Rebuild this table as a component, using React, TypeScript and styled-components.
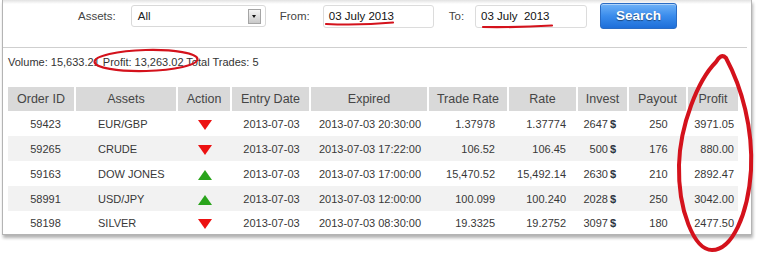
import styled, { createGlobalStyle } from "styled-components";

const TRADES = [
  { id: 59423, asset: "EUR/GBP", dir: "down", entry: "2013-07-03", expired: "2013-07-03 20:30:00", tradeRate: "1.37978", rate: "1.37774", invest: 2647, payout: 250, profit: "3971.05" },
  { id: 59265, asset: "CRUDE", dir: "down", entry: "2013-07-03", expired: "2013-07-03 17:22:00", tradeRate: "106.52", rate: "106.45", invest: 500, payout: 176, profit: "880.00" },
  { id: 59163, asset: "DOW JONES", dir: "up", entry: "2013-07-03", expired: "2013-07-03 17:00:00", tradeRate: "15,470.52", rate: "15,492.14", invest: 2630, payout: 210, profit: "2892.47" },
  { id: 58991, asset: "USD/JPY", dir: "up", entry: "2013-07-03", expired: "2013-07-03 12:00:00", tradeRate: "100.099", rate: "100.240", invest: 2028, payout: 250, profit: "3042.00" },
  { id: 58198, asset: "SILVER", dir: "down", entry: "2013-07-03", expired: "2013-07-03 08:30:00", tradeRate: "19.3325", rate: "19.2752", invest: 3097, payout: 180, profit: "2477.50" },
];

const COLS = [68, 102, 54, 79, 118, 80, 69, 51, 59, 50];

const App = () => {
  return (
    <>
      <GlobalStyle />
      <Page>
        <Panel>
          <FilterBar>
            <Label>Assets:</Label>
            <Select $ml={15}>
              <span>All</span>
              <DropButton />
            </Select>
            <Label $ml={14}>From:</Label>
            <DateInput $ml={13} $w={111}>03 July 2013</DateInput>
            <Label $ml={15}>To:</Label>
            <DateInput $ml={11} $w={112}>03 July&nbsp; 2013</DateInput>
            <SearchButton $ml={13}>Search</SearchButton>
          </FilterBar>
          <Stats>Volume: 15,633.21 Profit: 13,263.02 Total Trades: 5</Stats>
          <Table>
            <colgroup>
              {COLS.map((w, i) => (
                <col key={i} style={{ width: w }} />
              ))}
            </colgroup>
            <thead>
              <tr>
                <Th>Order ID</Th>
                <Th>Assets</Th>
                <Th>Action</Th>
                <Th>Entry Date</Th>
                <Th>Expired</Th>
                <Th>Trade Rate</Th>
                <Th>Rate</Th>
                <Th>Invest</Th>
                <Th>Payout</Th>
                <Th $last>Profit</Th>
              </tr>
            </thead>
            <tbody>
              {TRADES.map((t) => (
                <Row key={t.id}>
                  <Td $pl={7}>{t.id}</Td>
                  <Td $align="left" $pl={22}>{t.asset}</Td>
                  <Td>
                    <Arrow $dir={t.dir} />
                  </Td>
                  <Td>{t.entry}</Td>
                  <Td>{t.expired}</Td>
                  <Td $align="right" $pr={14}>{t.tradeRate}</Td>
                  <Td $align="right" $pr={12}>{t.rate}</Td>
                  <Td $align="right" $pr={13}>
                    {t.invest}
                    <Dollar>$</Dollar>
                  </Td>
                  <Td>{t.payout}</Td>
                  <Td $align="right" $pr={4}>{t.profit}</Td>
                </Row>
              ))}
            </tbody>
          </Table>
        </Panel>
        {/* hand-drawn red annotations over the screenshot */}
        <Marks width="757" height="256" viewBox="0 0 757 256">
          <path d="M326 24 Q360 25.5 393 22.5" />
          <path d="M483 27 Q518 27.5 552 25.5" />
          <ellipse cx="146" cy="60.5" rx="51.5" ry="10.5" transform="rotate(-1.5 146 60.5)" />
          <path
            strokeWidth="4"
            d="M716 62 C698 80 680 125 679 165 C678 210 694 250 712 250 C732 250 748 215 751 170 C753 128 742 88 726 58 C722 54 719 57 716 62"
          />
        </Marks>
      </Page>
    </>
  );
};

const GlobalStyle = createGlobalStyle`
  body {
    margin: 0;
    background: #fff;
    font-family: "Liberation Sans", Arial, sans-serif;
  }
`;

const Page = styled.div`
  position: relative;
  width: 757px;
  height: 256px;
  overflow: hidden;
`;

const Panel = styled.div`
  margin-left: 2px;
  width: 748px;
  height: 234px;
  border: 1px solid #b4b4b4;
  border-top: none;
  background: linear-gradient(to bottom, #e2e2e2 0, #fff 4px);
  box-shadow: 1px 3px 3px rgba(0, 0, 0, 0.3);
`;

const FilterBar = styled.div`
  display: flex;
  align-items: center;
  height: 32px;
  padding: 0 0 15px 75px;
  margin-right: 4px;
  border-bottom: 1px solid #cfcfcf;
`;

const Label = styled.span<{ $ml?: number }>`
  margin-left: ${(p) => p.$ml ?? 0}px;
  font-size: 11.5px;
  color: #444;
`;

const Select = styled.div<{ $ml: number }>`
  display: flex;
  align-items: center;
  justify-content: space-between;
  box-sizing: border-box;
  margin-left: ${(p) => p.$ml}px;
  width: 135px;
  height: 22px;
  padding: 0 4px 0 6px;
  border: 1px solid #d9d9d9;
  border-radius: 3px;
  font-size: 11.5px;
  color: #222;
`;

const DropButton = styled.span`
  position: relative;
  box-sizing: border-box;
  width: 13px;
  height: 15px;
  border: 1px solid #a5a5a5;
  background: linear-gradient(#f4f4f4, #c9c9c9);
  &::after {
    content: "";
    position: absolute;
    left: 3px;
    top: 5px;
    border-left: 2.5px solid transparent;
    border-right: 2.5px solid transparent;
    border-top: 3px solid #111;
  }
`;

const DateInput = styled.div<{ $ml: number; $w: number }>`
  box-sizing: border-box;
  margin-left: ${(p) => p.$ml}px;
  width: ${(p) => p.$w}px;
  height: 23px;
  padding: 4px 0 0 5px;
  border: 1px solid #dcdcdc;
  border-radius: 3px;
  font-size: 11.5px;
  color: #111;
`;

const SearchButton = styled.div<{ $ml: number }>`
  box-sizing: border-box;
  margin-left: ${(p) => p.$ml}px;
  width: 77px;
  height: 26px;
  border: 1px solid #2a6cc4;
  border-radius: 3px;
  background: linear-gradient(#6fb2f7, #3a8cec 50%, #1e6fd9);
  box-shadow: inset 0 1px 0 rgba(255, 255, 255, 0.45);
  color: #fff;
  font-size: 13.5px;
  font-weight: bold;
  line-height: 24px;
  text-align: center;
  text-shadow: 0 1px 1px rgba(0, 0, 0, 0.45);
`;

const Stats = styled.div`
  padding: 7px 0 18px 5px;
  font-size: 11px;
  line-height: 14px;
  color: #333;
`;

const Table = styled.table`
  margin-left: 5px;
  width: 730px;
  table-layout: fixed;
  border-collapse: separate;
  border-spacing: 0;
  font-size: 11px;
  color: #383838;
`;

const Th = styled.th<{ $last?: boolean }>`
  height: 24px;
  padding: 0;
  border-right: ${(p) => (p.$last ? 0 : 2)}px solid #fff;
  background: #d9d9d9;
  background-clip: padding-box;
  font-size: 12.5px;
  font-weight: normal;
  color: #454545;
  text-align: center;
`;

const Row = styled.tr`
  &:nth-child(even) {
    background: #f2f2f2;
  }
  &:last-child td {
    height: 23px;
  }
`;

const Td = styled.td<{ $align?: string; $pl?: number; $pr?: number }>`
  height: 25px;
  padding: 0 ${(p) => p.$pr ?? 0}px 0 ${(p) => p.$pl ?? 0}px;
  text-align: ${(p) => p.$align ?? "center"};
  white-space: nowrap;
`;

const Dollar = styled.span`
  margin-left: 2px;
  font-weight: bold;
  color: #2c3440;
`;

const Arrow = styled.span<{ $dir: string }>`
  display: inline-block;
  vertical-align: middle;
  width: 0;
  height: 0;
  border-left: 7.5px solid transparent;
  border-right: 7.5px solid transparent;
  ${(p) =>
    p.$dir === "up"
      ? "border-bottom: 10px solid #2aa41c;"
      : "border-top: 10px solid #ec1111;"}
`;

const Marks = styled.svg`
  position: absolute;
  left: 0;
  top: 0;
  pointer-events: none;
  fill: none;
  stroke: #d4121c;
  stroke-width: 2.2;
  stroke-linecap: round;
`;

export default App;
